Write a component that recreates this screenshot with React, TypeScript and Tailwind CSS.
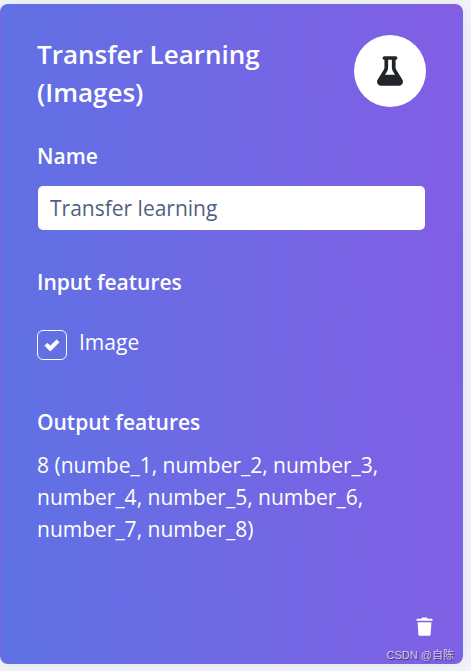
import { FaFlask } from 'react-icons/fa6';

function CheckIcon({ className }: { className?: string }) {
  return (
    <svg viewBox="0 0 48 39" className={className} fill="currentColor" stroke="currentColor" strokeWidth="3" strokeLinejoin="round" aria-hidden="true">
      <path d="M38 3 45 10 19 36 3 20 10 13 19 21Z" />
    </svg>
  );
}

function TrashIcon() {
  return (
    <svg viewBox="0 0 17 19" className="h-[19px] w-[17px]" fill="currentColor" aria-hidden="true">
      <path d="M5.5 1.2Q5.7.5 6.4.5h4.2q.7 0 .9.7l.1.5h4.2q.7 0 .7.7v1.4H.5V2.4q0-.7.7-.7h4.2z" />
      <path d="M1.6 5.2h13.8l-.7 12q-.1 1.5-1.6 1.5H3.9q-1.5 0-1.6-1.5z" />
    </svg>
  );
}

export default function App() {
  return (
    <main className="bg-[#f2f4f9] pt-1 pr-2 pb-[7px] font-['Open_Sans','Noto_Sans',sans-serif] text-[21px] leading-8 text-white">
      <section className="flex min-h-[660px] flex-col rounded-lg border border-transparent bg-[linear-gradient(87deg,#5e72e4,#825ee4)] px-9 pt-[30px] shadow-[0_0_16px_rgba(136,152,170,0.15)]">
        <header className="flex items-start justify-between">
          <h1 className="w-[260px] text-[26px] leading-[38px] font-semibold">Transfer Learning (Images)</h1>
          <div className="flex size-[72px] shrink-0 items-center justify-center rounded-full bg-white text-[#212529]">
            <FaFlask className="h-[30px] w-[26px]" />
          </div>
        </header>

        <label htmlFor="name" className="mt-[29px] font-semibold">Name</label>
        <input
          id="name"
          defaultValue="Transfer learning"
          className="mx-px mt-[14px] h-11 rounded-[5px] bg-white px-3 text-[#525f7f] outline-none"
        />

        <fieldset className="mt-9">
          <legend className="font-semibold">Input features</legend>
          <div className="mt-8 flex items-start gap-3">
            <span className="grid size-[30px] shrink-0 place-items-center">
              <input
                id="image"
                type="checkbox"
                defaultChecked
                className="peer col-start-1 row-start-1 size-[30px] appearance-none rounded-md border border-white"
              />
              <CheckIcon className="pointer-events-none invisible col-start-1 row-start-1 h-[13px] w-4 peer-checked:visible" />
            </span>
            <label htmlFor="image" className="-mt-1">Image</label>
          </div>
        </fieldset>

        <h2 className="mt-[46px] font-semibold">Output features</h2>
        <p className="mt-[11px]">8 (numbe_1, number_2, number_3, number_4, number_5, number_6, number_7, number_8)</p>

        <footer className="mt-auto flex flex-col items-end">
          <button type="button" aria-label="Delete block" className="-mr-[7px] block h-[19px]">
            <TrashIcon />
          </button>
          <small className="mt-[11px] -mr-7 text-[11px] leading-4 font-normal text-white/70 [font-family:'Liberation_Sans','Noto_Sans_CJK_SC',sans-serif] [text-shadow:1px_1px_1px_rgba(0,0,0,0.5)]">
            CSDN @自陈
          </small>
        </footer>
      </section>
    </main>
  );
}
